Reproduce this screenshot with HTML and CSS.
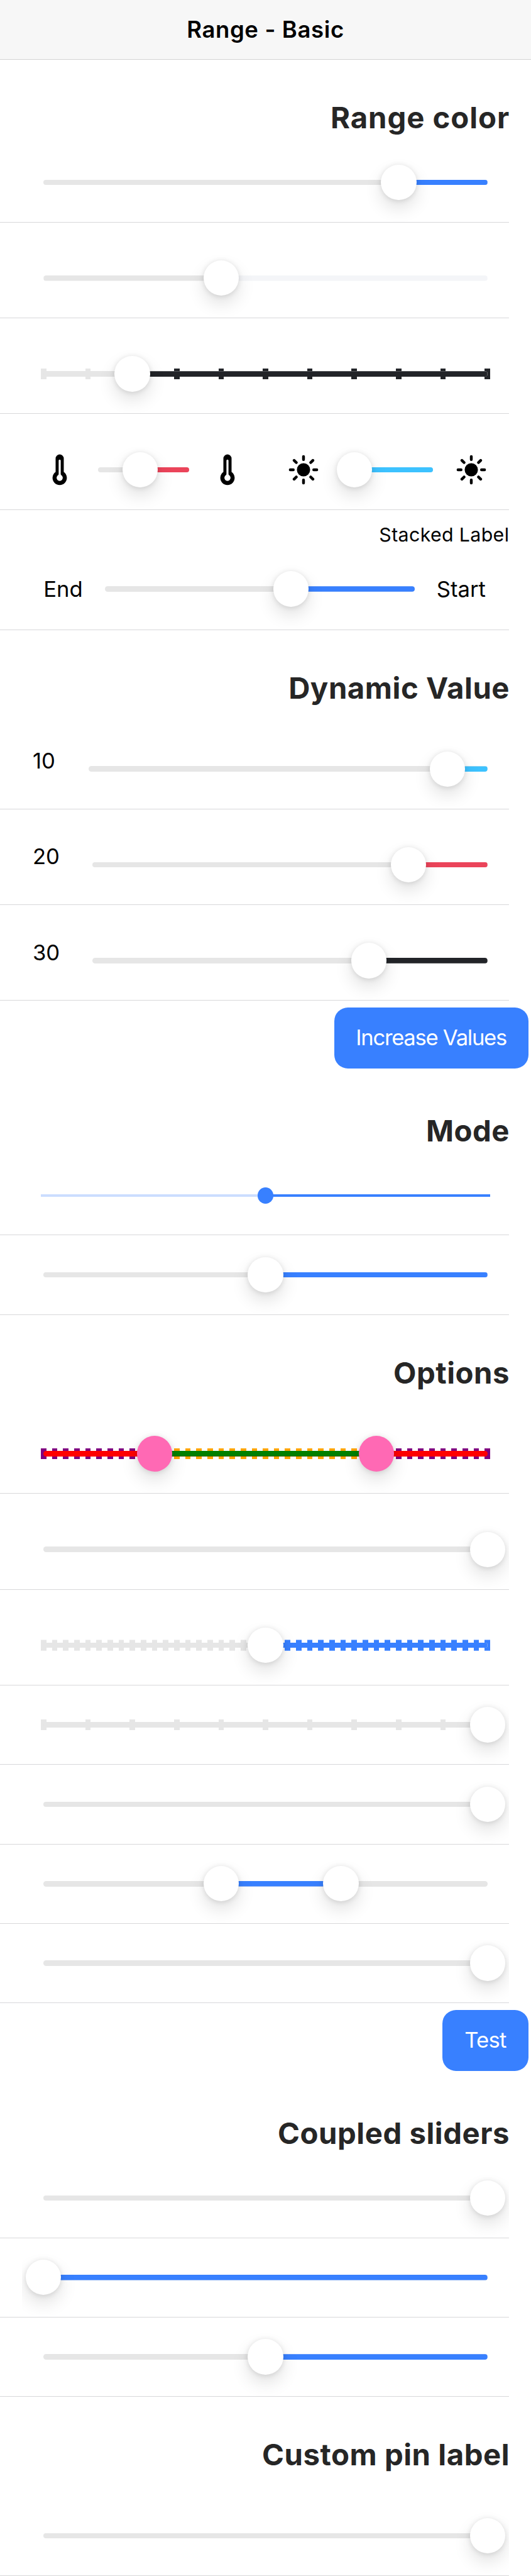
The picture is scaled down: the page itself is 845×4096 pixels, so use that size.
FILE: index.html
```html
<!DOCTYPE html>
<html lang="en">
<head>
<meta charset="utf-8">
<title>Range - Basic</title>
<link rel="stylesheet" href="styles.css">
</head>
<body>
<svg class="defs" width="0" height="0" aria-hidden="true">
  <symbol id="thermometer" viewBox="0 0 512 512">
    <path d="M256 16a64 64 0 0 0-64 64v211a112 112 0 1 0 128 0V80a64 64 0 0 0-64-64z"/>
    <path fill="#fff" d="M240 112a16 16 0 0 1 32 0v210q0 12 9 19a48 48 0 1 1-50 0q9-7 9-19z"/>
  </symbol>
  <symbol id="sunny" viewBox="0 0 512 512">
    <circle cx="256" cy="256" r="104"/>
    <path stroke="#000" stroke-width="44" stroke-linecap="round" d="M256 48v48M256 416v48M48 256h48M416 256h48M403 109l-34 34M143 369l-34 34M403 403l-34-34M143 143l-34-34"/>
  </symbol>
</svg>

<header class="toolbar"><h1>Range - Basic</h1></header>

<main>
  <section>
    <h2 class="w-color">Range color</h2>
    <div class="item"><div class="inner">
      <div class="range primary" style="--from:.8;--to:1;--knob:.8"><i class="track"></i><i class="active"></i><i class="knob"></i></div>
    </div></div>
    <div class="item pin"><div class="inner">
      <div class="range light" style="--from:.4;--to:1;--knob:.4"><i class="track cut"></i><i class="active"></i><i class="knob"></i></div>
    </div></div>
    <div class="item pin"><div class="inner">
      <div class="range dark ten" style="--from:.2;--to:1;--knob:.2"><i class="ticks"></i><i class="ticks on"></i><i class="track"></i><i class="active"></i><i class="knob"></i></div>
    </div></div>
    <div class="item pin"><div class="inner pair">
      <div class="group">
        <svg class="icon"><use href="#thermometer"/></svg>
        <div class="range danger" style="--from:.46;--to:1;--knob:.46"><i class="track"></i><i class="active"></i><i class="knob"></i></div>
        <svg class="icon"><use href="#thermometer"/></svg>
      </div>
      <div class="group">
        <svg class="icon"><use href="#sunny"/></svg>
        <div class="range secondary" style="--from:.14;--to:1;--knob:.14"><i class="track"></i><i class="active"></i><i class="knob"></i></div>
        <svg class="icon"><use href="#sunny"/></svg>
      </div>
    </div></div>
    <div class="item stacked">
      <span class="label">Stacked Label</span>
      <div class="inner">
        <span class="side">End</span>
        <div class="range primary" style="--from:.6;--to:1;--knob:.6"><i class="track"></i><i class="active"></i><i class="knob"></i></div>
        <span class="side start">Start</span>
      </div>
    </div>
  </section>

  <section>
    <h2>Dynamic Value</h2>
    <div class="item pin"><div class="inner valued">
      <span class="value ten-value">10</span>
      <div class="range secondary" style="--from:.9;--to:1;--knob:.9"><i class="track"></i><i class="active"></i><i class="knob"></i></div>
    </div></div>
    <div class="item pin"><div class="inner valued">
      <span class="value">20</span>
      <div class="range danger" style="--from:.8;--to:1;--knob:.8"><i class="track"></i><i class="active"></i><i class="knob"></i></div>
    </div></div>
    <div class="item pin"><div class="inner valued">
      <span class="value">30</span>
      <div class="range dark" style="--from:.7;--to:1;--knob:.7"><i class="track"></i><i class="active"></i><i class="knob"></i></div>
    </div></div>
    <div class="actions"><button class="button wide">Increase Values</button></div>
  </section>

  <section>
    <h2>Mode</h2>
    <div class="item"><div class="inner">
      <div class="range primary md" style="--from:.5;--to:1;--knob:.5"><i class="track"></i><i class="active"></i><i class="knob"></i></div>
    </div></div>
    <div class="item"><div class="inner">
      <div class="range primary" style="--from:.5;--to:1;--knob:.5"><i class="track"></i><i class="active"></i><i class="knob"></i></div>
    </div></div>
  </section>

  <section>
    <h2>Options</h2>
    <div class="item pin"><div class="inner">
      <div class="range custom forty" style="--from:.25;--to:.75;--knob:.25;--knob-b:.75"><i class="ticks"></i><i class="ticks on"></i><i class="track"></i><i class="active"></i><i class="knob"></i><i class="knob b"></i></div>
    </div></div>
    <div class="item pin"><div class="inner">
      <div class="range" style="--knob:1"><i class="track"></i><i class="knob"></i></div>
    </div></div>
    <div class="item pin"><div class="inner">
      <div class="range primary forty" style="--from:.5;--to:1;--knob:.5"><i class="ticks"></i><i class="ticks on"></i><i class="track"></i><i class="active"></i><i class="knob"></i></div>
    </div></div>
    <div class="item"><div class="inner">
      <div class="range ten" style="--knob:1"><i class="ticks"></i><i class="track"></i><i class="knob"></i></div>
    </div></div>
    <div class="item"><div class="inner">
      <div class="range" style="--knob:1"><i class="track"></i><i class="knob"></i></div>
    </div></div>
    <div class="item"><div class="inner">
      <div class="range primary" style="--from:.4;--to:.67;--knob:.4;--knob-b:.67"><i class="track"></i><i class="active"></i><i class="knob"></i><i class="knob b"></i></div>
    </div></div>
    <div class="item"><div class="inner">
      <div class="range" style="--knob:1"><i class="track"></i><i class="knob"></i></div>
    </div></div>
    <div class="actions"><button class="button small">Test</button></div>
  </section>

  <section>
    <h2>Coupled sliders</h2>
    <div class="item"><div class="inner">
      <div class="range" style="--knob:1"><i class="track"></i><i class="knob"></i></div>
    </div></div>
    <div class="item"><div class="inner">
      <div class="range primary" style="--from:0;--to:1;--knob:0"><i class="track"></i><i class="active"></i><i class="knob"></i></div>
    </div></div>
    <div class="item"><div class="inner">
      <div class="range primary" style="--from:.5;--to:1;--knob:.5"><i class="track"></i><i class="active"></i><i class="knob"></i></div>
    </div></div>
  </section>

  <section>
    <h2>Custom pin label</h2>
    <div class="item pin"><div class="inner">
      <div class="range" style="--knob:1"><i class="track"></i><i class="knob"></i></div>
    </div></div>
  </section>
</main>
</body>
</html>
```

FILE: styles.css
```css
html {
  font-size: 72.2px;
}

* {
  box-sizing: border-box;
}

body {
  margin: 0;
  background: #fff;
  color: #000;
  font-family: Inter, Roboto, "Liberation Sans", sans-serif;
  font-size: .48rem;
  overflow-x: hidden;
}

.defs {
  position: absolute;
}

.toolbar {
  height: 1.32rem;
  display: flex;
  align-items: center;
  justify-content: center;
  background: #f7f7f7;
  border-bottom: 1px solid #d3d3d3;
}

.toolbar h1 {
  margin: 0;
  font-size: .505rem;
  font-weight: 600;
  line-height: 1;
  letter-spacing: .009rem;
}

h2 {
  height: 1.83rem;
  margin: 0 .47rem 0 0;
  padding-top: .875rem;
  font-size: .655rem;
  font-weight: 700;
  line-height: .8rem;
  letter-spacing: .0075rem;
  text-align: right;
  white-space: nowrap;
  color: #262626;
}

.w-color {
  letter-spacing: .013rem;
}

.item {
  height: 1.75rem;
  margin-right: .48rem;
  padding-left: .48rem;
  display: flex;
  flex-direction: column;
  justify-content: flex-end;
  border-bottom: 1px solid #d8d8da;
}

.item.pin {
  height: 2.11rem;
}

.item.stacked {
  height: 2.65rem;
  justify-content: space-between;
}

.inner {
  height: 1.74rem;
  padding: 0 .48rem;
  display: flex;
  align-items: center;
  overflow: hidden;
}

.pair {
  gap: .96rem;
}

.group {
  flex: 1;
  display: flex;
  align-items: center;
  gap: .48rem;
}

.icon {
  width: .72rem;
  height: .72rem;
  flex: none;
}

.label {
  padding-top: .29rem;
  align-self: flex-end;
  font-size: .42rem;
  line-height: .5rem;
  white-space: nowrap;
  letter-spacing: .005rem;
}

.stacked .inner {
  height: 1.79rem;
}

.side {
  width: 1.355rem;
  flex: none;
  line-height: .6rem;
}

.side.start {
  width: 1.6rem;
  padding-left: .48rem;
  white-space: nowrap;
}

.valued {
  padding-left: .24rem;
}

.value {
  width: 1.32rem;
  flex: none;
  padding-bottom: .36rem;
  line-height: .6rem;
}

.ten-value {
  width: 1.23rem;
}

/* Every part of a slider shares one grid cell and is centred vertically. */
.range {
  --fill: #3880ff;
  --rail: #e6e6e6;
  --tick-on: var(--fill);
  --tick-off: var(--rail);
  flex: 1;
  min-width: 0;
  display: grid;
  align-items: center;
  isolation: isolate;
}

.range > i {
  grid-area: 1 / 1;
}

.track,
.active {
  z-index: 1;
  height: .12rem;
  border-radius: .06rem;
  background: var(--rail);
}

.active {
  z-index: 2;
  background: var(--fill);
}

.active,
.ticks.on {
  clip-path: inset(0 calc((1 - var(--to)) * 100%) 0 calc(var(--from) * 100%));
}

.cut {
  clip-path: inset(0 calc((1 - var(--from)) * 100%) 0 0);
}

.ticks {
  height: .24rem;
  margin: 0 -.06rem;
  background: repeating-linear-gradient(to right, var(--tick-off) 0 .12rem, transparent .12rem var(--step));
}

.ticks.on {
  --tick-off: var(--tick-on);
}

.ten {
  --step: calc((100% - .12rem) / 10);
}

.forty {
  --step: calc((100% - .12rem) / 40);
}

.range.dark .ticks:not(.on),
.range.custom .ticks:not(.on),
.range.forty .ticks:not(.on) {
  clip-path: polygon(0 0, calc(var(--from) * 100%) 0, calc(var(--from) * 100%) 100%, calc(var(--to) * 100%) 100%, calc(var(--to) * 100%) 0, 100% 0, 100% 100%, 0 100%);
}

.knob {
  z-index: 3;
  width: .78rem;
  height: .78rem;
  justify-self: start;
  margin-left: calc(var(--knob) * 100% - .39rem);
  margin-right: -.39rem;
  border-radius: 50%;
  background: #fff;
  box-shadow: 0 .015rem .12rem rgba(0, 0, 0, .12), 0 .18rem .39rem rgba(0, 0, 0, .12);
}

.knob.b {
  margin-left: calc(var(--knob-b) * 100% - .39rem);
}

.light { --fill: #f4f5f8; }
.dark { --fill: #222428; }
.danger { --fill: #eb445a; }
.secondary { --fill: #3dc2ff; }

.custom {
  --fill: green;
  --rail: red;
  --tick-on: orange;
  --tick-off: purple;
}

.custom .knob {
  background: hotpink;
}

.md {
  --rail: #cbddff;
}

.md .track,
.md .active {
  height: .06rem;
  margin: 0 -.06rem;
  border-radius: 0;
}

.md .knob {
  width: .36rem;
  height: .36rem;
  margin-left: calc(var(--knob) * 100% - .18rem);
  background: var(--fill);
  box-shadow: none;
}

.actions {
  height: 1.59rem;
  padding: .15rem .06rem 0 0;
  display: flex;
  justify-content: flex-end;
  align-items: flex-start;
}

.button {
  height: 1.34rem;
  padding: 0 0 .05rem;
  border: 0;
  border-radius: .3rem;
  background: #3880ff;
  color: #fff;
  font: inherit;
  white-space: nowrap;
}

.wide {
  width: 4.28rem;
  letter-spacing: -.018rem;
}

.small {
  width: 1.89rem;
  letter-spacing: -.01rem;
}
```
